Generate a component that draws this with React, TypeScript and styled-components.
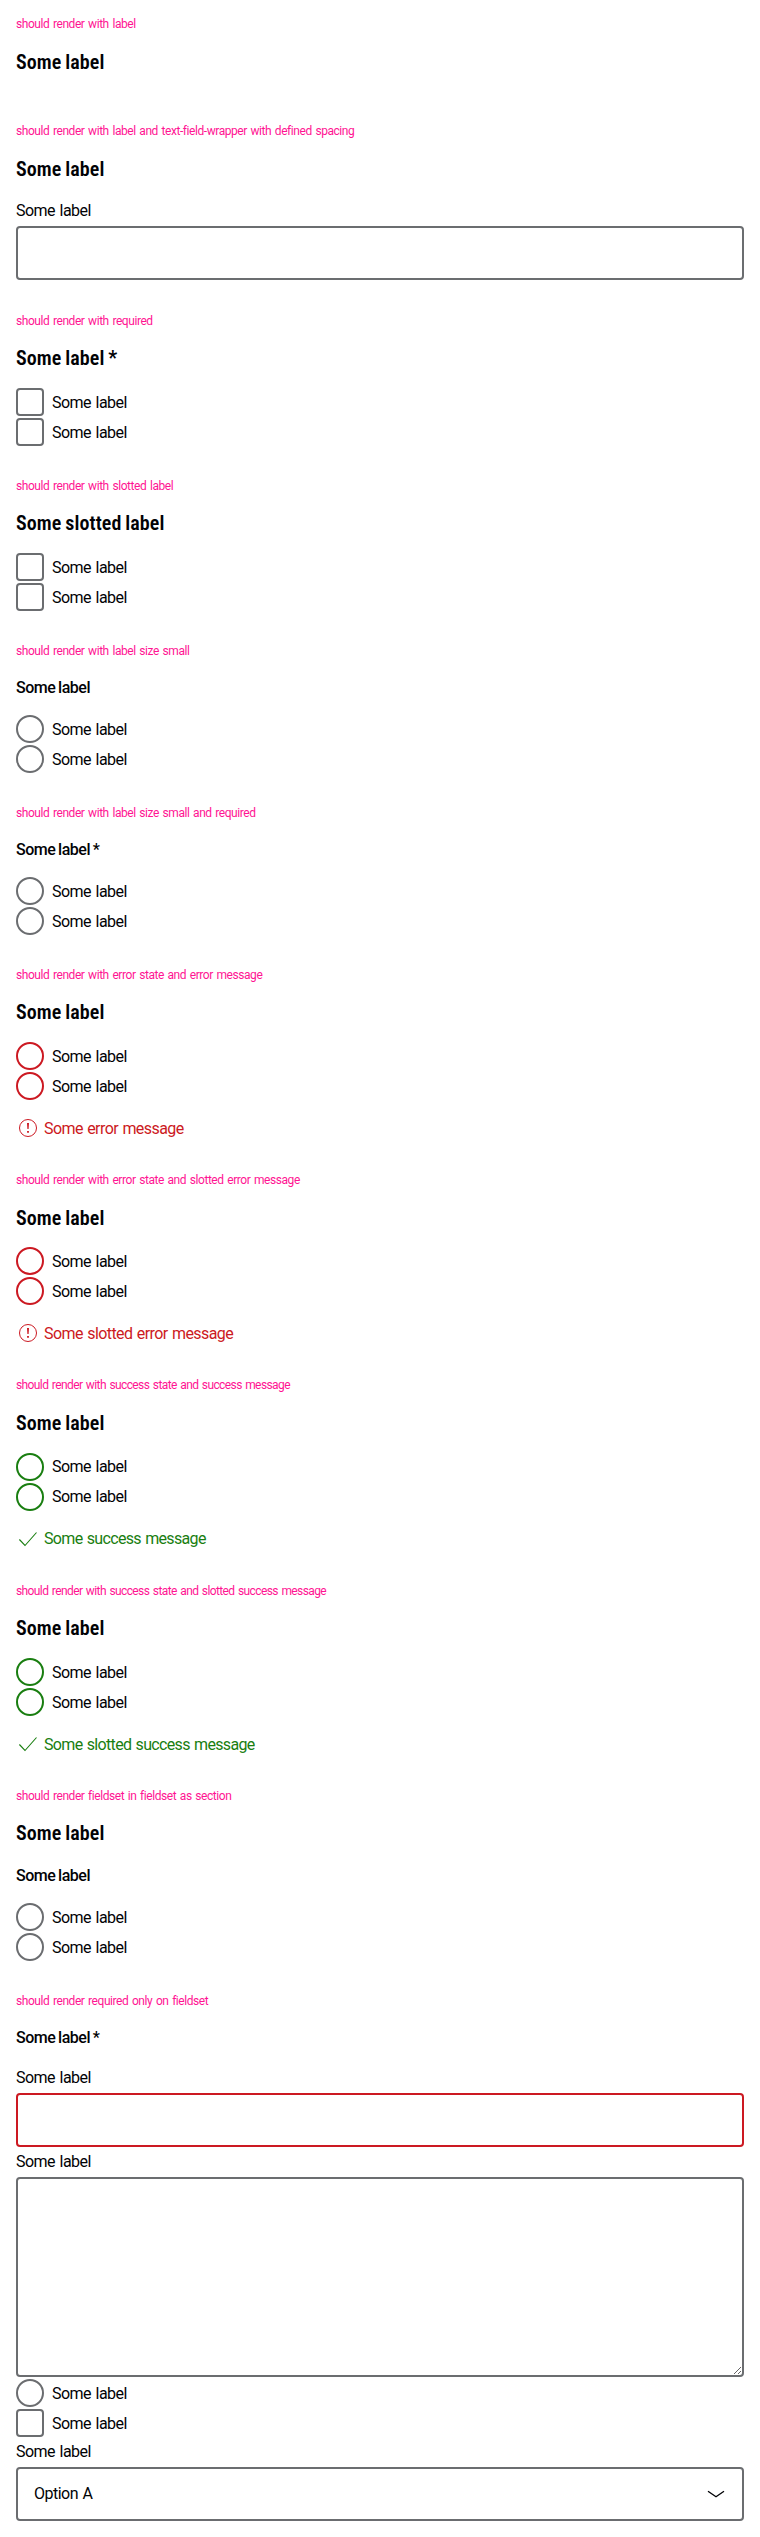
import React from "react";
import styled, { createGlobalStyle } from "styled-components";

type State = "none" | "error" | "success";

const colors: Record<State, string> = {
  none: "#6b6d70",
  error: "#cc1922",
  success: "#197e10",
};

const GlobalStyle = createGlobalStyle`
  *, *::before, *::after { box-sizing: border-box; }
  body {
    margin: 0;
    background: #fff;
    color: #010205;
    font-family: Roboto, sans-serif;
    font-size: 16px;
    line-height: 24px;
    letter-spacing: -0.52px;
    word-spacing: 1px;
  }
`;

const Page = styled.main`
  display: flex;
  flex-direction: column;
`;

const Section = styled.section`
  padding: 16px;
`;

const Caption = styled.p<{ $tight?: boolean }>`
  margin: 0 0 15px;
  color: #ff1493;
  font-size: 12px;
  line-height: 16px;
  letter-spacing: ${(p) => (p.$tight ? "-0.6px" : "-0.44px")};
  word-spacing: 1.1px;
`;

const FieldGroup = styled.fieldset`
  margin: 0;
  padding: 0;
  border: 0;
  min-width: 0;
`;

const Legend = styled.legend`
  display: block;
  margin: 0 0 15.7px;
  padding: 0.6px 0 0;
  font-family: "Roboto Condensed", Roboto, sans-serif;
  font-weight: 600;
  font-size: 20px;
  line-height: 28px;
  letter-spacing: 0.1px;
  word-spacing: -1px;
`;

const SmallLegend = styled.legend<{ $nested?: boolean }>`
  display: block;
  margin: 0 0 ${(p) => (p.$nested ? "15.2px" : "14.8px")};
  padding: ${(p) => (p.$nested ? "0.8px" : "2px")} 0 0;
  font-weight: 500;
  font-size: 16px;
  line-height: 24px;
  letter-spacing: -0.48px;
  word-spacing: -0.8px;
`;

const Controls = styled.div`
  display: flex;
  flex-direction: column;
  gap: 2px;
`;

const ControlRow = styled.label`
  display: flex;
  height: 28px;
  gap: 8px;
`;

const ControlText = styled.span`
  padding-top: 2.9px;
`;

const Control = styled.input<{ $state: State }>`
  appearance: none;
  flex: none;
  width: 28px;
  height: 28px;
  margin: 0;
  border: 2px solid ${(p) => colors[p.$state]};
  border-radius: ${(p) => (p.type === "radio" ? "50%" : "4px")};
  background: #fff;
`;

const Field = styled.label`
  display: flex;
  flex-direction: column;
  gap: 3px;
`;

const FieldLabel = styled.span`
  padding-top: 0.8px;
`;

const TextInput = styled.input<{ $state: State }>`
  width: 100%;
  height: 54px;
  margin: 0 0 0.2px;
  padding: 13px 16px;
  border: 2px solid ${(p) => colors[p.$state]};
  border-radius: 4px;
  background: #fff;
  outline: none;
`;

const TextArea = styled.textarea`
  display: block;
  width: 100%;
  height: 200px;
  margin: 0 0 0.2px;
  border: 2px solid ${colors.none};
  border-radius: 4px;
  background: #fff;
  resize: vertical;
`;

const SelectBox = styled.div`
  display: flex;
  align-items: center;
  justify-content: space-between;
  height: 54px;
  padding: 0 14px 0 16px;
  border: 2px solid ${colors.none};
  border-radius: 4px;
`;

const SelectValue = styled.span`
  padding-top: 1px;
`;

const Message = styled.p<{ $state: State }>`
  display: flex;
  height: 24px;
  gap: 4px;
  margin: 16px 0 0;
  color: ${(p) => colors[p.$state]};
  letter-spacing: ${(p) => (p.$state === "success" ? "-0.67px" : "-0.58px")};
`;

const MessageText = styled.span`
  padding-top: 0.9px;
`;

const Icon = styled.svg`
  flex: none;
  width: 24px;
  height: 24px;
`;

const ErrorIcon = () => (
  <Icon viewBox="0 0 24 24" fill="none" stroke="currentColor">
    <circle cx="12" cy="12" r="8.5" />
    <path d="M11 7h2l-.4 6h-1.2zM11.1 14.9h1.8v1.8h-1.8z" fill="currentColor" stroke="none" />
  </Icon>
);

const CheckIcon = () => (
  <Icon viewBox="0 0 24 24" fill="none" stroke="currentColor" strokeWidth="1.1">
    <path d="M3.4 12.5l5.6 6L20.5 5.5" />
  </Icon>
);

const ChevronIcon = () => (
  <Icon viewBox="0 0 24 24" fill="none" stroke="currentColor" strokeWidth="1.3">
    <path d="M4 9.2l8 5.6 8-5.6" />
  </Icon>
);

const Option = ({ type, state = "none" }: { type: "radio" | "checkbox"; state?: State }) => (
  <ControlRow>
    <Control type={type} $state={state} />
    <ControlText>Some label</ControlText>
  </ControlRow>
);

const OptionPair = ({ type, state }: { type: "radio" | "checkbox"; state?: State }) => (
  <Controls>
    <Option type={type} state={state} />
    <Option type={type} state={state} />
  </Controls>
);

const TextField = ({ state = "none" }: { state?: State }) => (
  <Field>
    <FieldLabel>Some label</FieldLabel>
    <TextInput type="text" $state={state} />
  </Field>
);

interface ExampleProps {
  title: string;
  legend?: string;
  small?: boolean;
  state?: State;
  message?: string;
  children?: React.ReactNode;
}

const Example = ({ title, legend = "Some label", small, state = "none", message, children }: ExampleProps) => (
  <Section>
    <Caption $tight={state === "success"}>{title}</Caption>
    <FieldGroup>
      {small ? <SmallLegend>{legend}</SmallLegend> : <Legend>{legend}</Legend>}
      {children}
      {message && (
        <Message $state={state}>
          {state === "error" ? <ErrorIcon /> : <CheckIcon />}
          <MessageText>{message}</MessageText>
        </Message>
      )}
    </FieldGroup>
  </Section>
);

export default function App() {
  return (
    <Page>
      <GlobalStyle />
      <Example title="should render with label" />
      <Example title="should render with label and text-field-wrapper with defined spacing">
        <TextField />
      </Example>
      <Example title="should render with required" legend="Some label *">
        <OptionPair type="checkbox" />
      </Example>
      <Example title="should render with slotted label" legend="Some slotted label">
        <OptionPair type="checkbox" />
      </Example>
      <Example title="should render with label size small" small>
        <OptionPair type="radio" />
      </Example>
      <Example title="should render with label size small and required" legend="Some label *" small>
        <OptionPair type="radio" />
      </Example>
      <Example title="should render with error state and error message" state="error" message="Some error message">
        <OptionPair type="radio" state="error" />
      </Example>
      <Example
        title="should render with error state and slotted error message"
        state="error"
        message="Some slotted error message"
      >
        <OptionPair type="radio" state="error" />
      </Example>
      <Example
        title="should render with success state and success message"
        state="success"
        message="Some success message"
      >
        <OptionPair type="radio" state="success" />
      </Example>
      <Example
        title="should render with success state and slotted success message"
        state="success"
        message="Some slotted success message"
      >
        <OptionPair type="radio" state="success" />
      </Example>
      <Example title="should render fieldset in fieldset as section">
        <FieldGroup>
          <SmallLegend $nested>Some label</SmallLegend>
          <OptionPair type="radio" />
        </FieldGroup>
      </Example>
      <Example title="should render required only on fieldset" legend="Some label *" small>
        <Controls>
          <TextField state="error" />
          <Field>
            <FieldLabel>Some label</FieldLabel>
            <TextArea />
          </Field>
          <Option type="radio" />
          <Option type="checkbox" />
          <Field as="div">
            <FieldLabel>Some label</FieldLabel>
            <SelectBox>
              <SelectValue>Option A</SelectValue>
              <ChevronIcon />
            </SelectBox>
          </Field>
        </Controls>
      </Example>
    </Page>
  );
}
